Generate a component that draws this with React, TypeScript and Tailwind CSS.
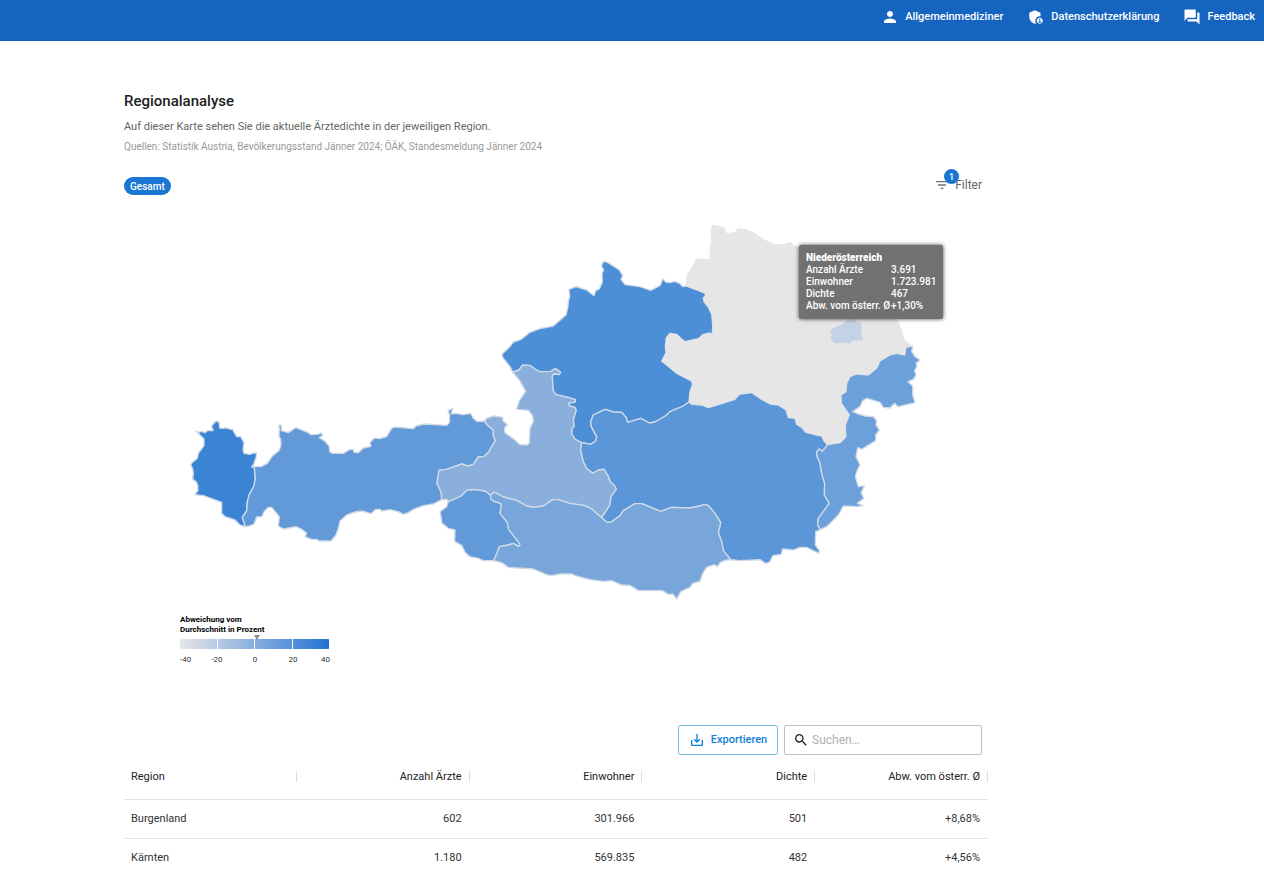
import { useState } from 'react';
import {
  MdAdminPanelSettings,
  MdFilterList,
  MdPerson,
  MdQuestionAnswer,
  MdSaveAlt,
  MdSearch,
} from 'react-icons/md';

interface RegionRow {
  region: string;
  doctors: string;
  inhabitants: string;
  density: string;
  deviation: string;
}

interface RegionShape {
  name: string;
  fill: string;
  points: string;
}

const rows: RegionRow[] = [
  { region: 'Burgenland', doctors: '602', inhabitants: '301.966', density: '501', deviation: '+8,68%' },
  { region: 'Kärnten', doctors: '1.180', inhabitants: '569.835', density: '482', deviation: '+4,56%' },
];

const columns = ['Region', 'Anzahl Ärzte', 'Einwohner', 'Dichte', 'Abw. vom österr. Ø'];

const tooltipRows = [
  ['Anzahl Ärzte', '3.691'],
  ['Einwohner', '1.723.981'],
  ['Dichte', '467'],
  ['Abw. vom österr. Ø', '+1,30%'],
];

const reverse = (points: string) => points.split(' ').reverse().join(' ');
const join = (...parts: string[]) => parts.join(' ');

// Borders that two regions share
const vbgTirol = '755,1400 763,1403 766,1435 762,1458 748,1483 742,1505 740,1533 727,1552 736,1580';
const tirolSbg =
  '1453,1263 1465,1278 1480,1290 1480,1308 1486,1322 1472,1345 1467,1355 1453,1369 1435,1371 1420,1393 1402,1398 1385,1392 1340,1408 1317,1411 1311,1450 1324,1478 1325,1499';
const sbgOsttirol = '1345,1505 1383,1488 1400,1471 1425,1468 1455,1473 1472,1486';
const osttirolKtn =
  '1472,1486 1472,1496 1482,1504 1502,1510 1504,1518 1500,1540 1522,1568 1526,1588 1552,1622 1560,1633 1556,1639 1540,1630 1525,1635 1498,1640 1490,1662 1481,1682';
const sbgKtn =
  '1472,1486 1480,1477 1486,1478 1510,1491 1552,1502 1580,1518 1600,1522 1630,1518 1658,1499 1673,1499 1710,1510 1755,1517 1775,1527 1805,1553';
const sbgStmk =
  '1805,1553 1830,1515 1833,1490 1849,1468 1846,1460 1830,1443 1825,1428 1812,1407 1795,1410 1778,1419 1760,1405 1750,1385 1742,1350 1745,1328';
const sbgOoe =
  '1745,1328 1725,1317 1715,1300 1717,1285 1723,1278 1720,1260 1729,1230 1725,1222 1708,1217 1707,1209 1725,1207 1727,1199 1705,1192 1668,1183 1660,1172 1657,1130 1661,1122 1678,1124 1682,1116 1666,1105 1652,1114 1620,1115 1605,1107 1590,1096 1568,1095 1556,1110 1538,1116';
const ooeNoe =
  '2058,858 2090,870 2116,880 2116,888 2110,893 2112,905 2125,922 2135,943 2138,975 2137,1003 2130,999 2110,1003 2095,1016 2055,1025 2045,1018 2030,1003 2010,1000 1999,1013 1996,1040 1998,1058 1985,1083 2030,1120 2073,1142 2078,1152 2070,1175 2067,1206';
const ooeStmk =
  '2067,1206 2050,1218 2010,1235 1996,1248 1965,1266 1948,1269 1922,1255 1883,1267 1878,1252 1865,1237 1840,1236 1815,1228 1780,1245 1772,1265 1774,1280 1790,1310 1787,1323 1773,1333 1745,1328';
const noeStmk =
  '2067,1206 2075,1213 2105,1215 2125,1223 2165,1211 2205,1198 2218,1183 2255,1178 2285,1198 2310,1212 2335,1215 2358,1230 2365,1253 2385,1255 2390,1273 2405,1282 2417,1297 2450,1305 2465,1308 2472,1323 2483,1334';
const noeBgld =
  '2738,1038 2718,1042 2714,1065 2690,1060 2670,1065 2640,1083 2630,1105 2605,1125 2570,1122 2550,1130 2540,1150 2538,1175 2523,1185 2524,1210 2548,1245 2536,1275 2538,1310 2520,1328 2483,1334';
const bgldStmk =
  '2461,1589 2453,1575 2455,1555 2488,1510 2473,1485 2474,1450 2465,1420 2460,1390 2450,1365 2450,1355 2458,1347 2467,1354 2483,1334';
const stmkKtn =
  '2192,1679 2170,1652 2165,1625 2155,1598 2162,1568 2145,1540 2125,1517 2113,1513 2100,1518 2070,1524 2015,1522 1982,1534 1925,1511 1905,1511 1870,1532 1860,1547 1835,1565 1823,1568 1805,1553';

const shapes: RegionShape[] = [
  {
    name: 'Vorarlberg',
    fill: '#3b84d3',
    points: join(
      '587,1293 595,1298 603,1294 615,1298 622,1292 640,1292 635,1280 637,1275 648,1263 657,1266 659,1284 672,1285 675,1283 693,1288 697,1286 703,1298 710,1310 722,1310 732,1328 729,1350 732,1360 748,1363 770,1357 768,1375 763,1385 762,1393',
      vbgTirol,
      '720,1575 705,1560 675,1550 665,1540 665,1507 610,1487 585,1484 594,1472 593,1455 588,1445 578,1438 580,1420 578,1405 572,1397 576,1388 592,1375 595,1360 612,1337 612,1317 600,1305'
    ),
  },
  {
    name: 'Tirol',
    fill: '#6299d8',
    points: join(
      reverse(vbgTirol),
      '783,1400 802,1390 817,1368 837,1352 843,1335 842,1318 837,1308 838,1285 836,1276 844,1275 844,1292 865,1298 887,1283 925,1298 932,1304 952,1303 964,1299 968,1306 958,1313 975,1324 988,1340 989,1355 997,1360 1030,1360 1050,1348 1060,1349 1062,1357 1075,1358 1090,1344 1110,1340 1113,1337 1109,1328 1123,1314 1140,1316 1160,1310 1175,1285 1183,1281 1220,1284 1240,1286 1248,1278 1273,1272 1340,1276 1348,1268 1349,1245 1344,1232 1358,1225 1354,1242 1365,1240 1390,1244 1412,1240 1420,1255 1432,1265',
      tirolSbg,
      '1300,1512 1270,1517 1240,1528 1225,1538 1210,1543 1195,1535 1170,1529 1145,1533 1140,1528 1127,1528 1113,1541 1085,1533 1065,1536 1040,1545 1020,1563 1015,1585 1008,1605 993,1623 958,1623 950,1618 935,1618 915,1610 920,1600 905,1588 888,1580 850,1587 835,1578 838,1550 815,1522 805,1522 792,1535 786,1550 770,1551 762,1572 748,1578'
    ),
  },
  {
    name: 'Osttirol',
    fill: '#6299d8',
    points: join(
      sbgOsttirol,
      osttirolKtn,
      '1450,1682 1435,1675 1410,1670 1395,1657 1386,1637 1364,1624 1365,1590 1345,1585 1326,1570 1324,1555 1320,1535 1340,1520'
    ),
  },
  {
    name: 'Salzburg',
    fill: '#8bafdc',
    points: join(
      tirolSbg,
      '1342,1498',
      sbgOsttirol,
      sbgKtn,
      sbgStmk,
      sbgOoe,
      '1560,1143 1577,1174 1558,1202 1550,1228 1585,1231 1598,1247 1600,1265 1590,1285 1588,1328 1582,1335 1560,1334 1545,1320 1515,1298 1513,1285 1522,1273 1508,1262 1509,1252 1480,1248 1460,1255'
    ),
  },
  {
    name: 'Oberösterreich',
    fill: '#4c8fd7',
    points: join(
      sbgOoe,
      '1530,1100 1508,1072 1506,1062 1528,1042 1540,1026 1562,1019 1590,997 1620,986 1660,978 1698,945 1704,920 1705,905 1709,890 1707,868 1728,860 1760,870 1782,887 1787,872 1798,867 1807,847 1806,820 1811,810 1804,797 1811,784 1823,787 1858,810 1868,827 1863,838 1875,854 1920,860 1952,871 1980,857 1989,836 1997,846 2010,848 2025,844 2040,851 2048,860',
      ooeNoe,
      ooeStmk
    ),
  },
  {
    name: 'Steiermark',
    fill: '#5b96d8',
    points: join(
      sbgStmk,
      reverse(ooeStmk),
      noeStmk,
      reverse(bgldStmk),
      '2447,1595 2446,1635 2458,1652 2457,1660 2440,1652 2420,1642 2400,1642 2380,1650 2347,1647 2344,1663 2318,1667 2310,1685 2298,1691 2280,1679 2220,1682',
      stmkKtn
    ),
  },
  {
    name: 'Kärnten',
    fill: '#78a6da',
    points: join(
      sbgKtn,
      reverse(stmkKtn),
      '2175,1681 2160,1688 2153,1700 2143,1694 2120,1702 2108,1720 2100,1744 2078,1750 2070,1762 2042,1775 2031,1797 2018,1782 2005,1783 1988,1772 1915,1772 1890,1756 1865,1755 1835,1742 1810,1744 1770,1739 1725,1727 1717,1722 1680,1722 1655,1727 1640,1724 1600,1707 1525,1702 1505,1688',
      reverse(osttirolKtn)
    ),
  },
  {
    name: 'Burgenland',
    fill: '#6ca0da',
    points: join(
      reverse(noeBgld),
      '2735,1055 2745,1070 2760,1080 2748,1090 2751,1098 2744,1112 2748,1125 2740,1138 2724,1145 2738,1158 2738,1185 2745,1208 2695,1220 2683,1210 2670,1224 2650,1222 2640,1207 2600,1195 2588,1202 2580,1220 2558,1235 2575,1242 2595,1248 2620,1250 2630,1263 2628,1275 2638,1290 2627,1305 2627,1322 2585,1348 2573,1343 2568,1370 2580,1395 2570,1415 2566,1430 2575,1460 2593,1457 2583,1478 2592,1495 2572,1510 2588,1516 2575,1520 2530,1518 2515,1545 2495,1565 2480,1580',
      bgldStmk
    ),
  },
];

const activeShapes: RegionShape[] = [
  {
    name: 'Niederösterreich',
    fill: '#e6e6e6',
    points: join(
      reverse(ooeNoe),
      '2058,850 2060,825 2080,795 2088,775 2110,776 2125,778 2130,765 2128,750 2133,725 2132,685 2137,675 2150,675 2175,683 2180,700 2205,695 2215,685 2240,688 2270,702 2290,717 2325,733 2350,733 2370,725 2380,735 2395,742 2450,755 2600,770 2670,885 2695,965 2705,990 2712,1017 2734,1036',
      noeBgld,
      reverse(noeStmk)
    ),
  },
  {
    name: 'Wien',
    fill: '#c3d2e4',
    points:
      '2490,993 2510,978 2525,975 2547,957 2562,957 2570,967 2583,967 2586,985 2583,1005 2591,1021 2560,1021 2547,1031 2530,1028 2505,1030 2492,1020 2496,1003',
  },
];

function TopBar() {
  return (
    <header className="flex h-[41px] items-start justify-end gap-6 bg-[#1565c0] pt-2 pr-[9px] text-[11px] leading-[18px] font-medium text-white">
      <a href="#profil" className="flex items-center gap-[6px]">
        <MdPerson className="h-[18px] w-[18px]" />
        Allgemeinmediziner
      </a>
      <a href="#datenschutz" className="flex items-center gap-[6px]">
        <MdAdminPanelSettings className="h-[18px] w-[18px]" />
        Datenschutzerklärung
      </a>
      <a href="#feedback" className="flex items-center gap-[6px]">
        <MdQuestionAnswer className="h-[18px] w-[18px]" />
        Feedback
      </a>
    </header>
  );
}

function MapTooltip() {
  return (
    <div className="absolute top-[25px] left-[675px] w-[144px] rounded-xs bg-[#717171] px-[7px] py-[7px] text-[10px] leading-3 font-medium whitespace-nowrap text-white shadow-[0_0_4px_rgba(0,0,0,0.7)]">
      <p className="font-black">Niederösterreich</p>
      {tooltipRows.map(([label, value]) => (
        <div key={label} className="flex">
          <span className="w-[85px] shrink-0">{label}</span>
          <span>{value}</span>
        </div>
      ))}
    </div>
  );
}

function RegionMap() {
  return (
    <div className="relative mt-[25px]">
      <svg viewBox="372 660 2574 1152" className="block w-full" role="img" aria-label="Ärztedichte nach Region">
        {shapes.map((shape) => (
          <polygon key={shape.name} points={shape.points} fill={shape.fill} stroke="#d0dae6" strokeWidth="4" strokeLinejoin="round" />
        ))}
        {activeShapes.map((shape) => (
          <polygon key={shape.name} points={shape.points} fill={shape.fill} />
        ))}
      </svg>
      <MapTooltip />
    </div>
  );
}

function Legend() {
  return (
    <div className="mt-[11px] ml-[56px] w-[150px] text-black">
      <p className="text-[8px] leading-[10px] font-bold">
        Abweichung vom
        <br />
        Durchschnitt in Prozent
      </p>
      <div className="relative mt-1 grid h-[10px] grid-cols-4 divide-x divide-white rounded-xs bg-linear-to-r from-[#e6e6e6] to-[#1a72d2]">
        <span />
        <span />
        <span />
        <span />
        <svg viewBox="0 0 6 5" className="absolute -top-[4px] left-[74px] h-[5px] w-[6px]">
          <path d="M0 0h6L3 5z" fill="#8f8f8f" />
        </svg>
      </div>
      <div className="mt-[6px] grid grid-cols-[18px_38px_38px_38px_18px] text-center text-[8px] leading-[10px] text-[#333]">
        <span className="text-left">-40</span>
        <span>-20</span>
        <span>0</span>
        <span>20</span>
        <span className="text-right">40</span>
      </div>
    </div>
  );
}

function RegionTable({ data }: { data: RegionRow[] }) {
  return (
    <table className="w-full table-fixed border-collapse text-[11px] leading-4 text-[#333]">
      <thead>
        <tr className="h-[44px] border-b border-[#e0e0e0]">
          {columns.map((column, index) => (
            <th key={column} className="p-0 font-normal text-[#222]">
              <div className={index === 0 ? 'flex items-center justify-between pl-[7px]' : 'flex items-center justify-end gap-[7px]'}>
                {column}
                <span className="h-[11px] w-px bg-[#dcdcdc]" />
              </div>
            </th>
          ))}
        </tr>
      </thead>
      <tbody>
        {data.map((row) => (
          <tr key={row.region} className="h-[39px] border-b border-[#e0e0e0] text-right">
            <td className="px-[7px] py-0 text-left">{row.region}</td>
            <td className="px-2 py-0">{row.doctors}</td>
            <td className="px-2 py-0">{row.inhabitants}</td>
            <td className="px-2 py-0">{row.density}</td>
            <td className="px-2 py-0">{row.deviation}</td>
          </tr>
        ))}
      </tbody>
    </table>
  );
}

export default function App() {
  const [search, setSearch] = useState('');
  const visibleRows = rows.filter((row) => row.region.toLowerCase().includes(search.toLowerCase()));

  return (
    <div className="min-h-screen bg-white font-[Roboto,sans-serif]">
      <TopBar />
      <main className="max-w-[988px] pt-[50px] pl-[124px]">
        <div className="pr-[6px]">
          <h1 className="text-[15px] leading-5 font-medium text-[#212121]">Regionalanalyse</h1>
          <p className="mt-2 text-[11px] leading-4 text-[#666]">
            Auf dieser Karte sehen Sie die aktuelle Ärztedichte in der jeweiligen Region.
          </p>
          <p className="mt-1 text-[10px] leading-4 text-[#999]">
            Quellen: Statistik Austria, Bevölkerungsstand Jänner 2024; ÖÄK, Standesmeldung Jänner 2024
          </p>

          <div className="mt-[22px] flex h-[18px] items-start justify-between">
            <span className="flex h-[18px] items-center rounded-full bg-[#1976d2] px-[6px] text-[10px] font-medium text-white">
              Gesamt
            </span>
            <button type="button" className="flex items-center gap-[5px] text-[12px] leading-4 text-[#666]">
              <span className="relative">
                <MdFilterList className="h-4 w-4 text-[#757575]" />
                <span className="absolute -top-[8px] left-[10px] flex h-[15px] w-[15px] items-center justify-center rounded-full bg-[#1976d2] text-[9px] font-medium text-white">
                  1
                </span>
              </span>
              Filter
            </button>
          </div>

          <RegionMap />
          <Legend />

          <div className="mt-[60px] flex justify-end gap-[6px]">
            <button
              type="button"
              className="flex h-[30px] w-[100px] items-center justify-center gap-[6px] rounded-xs border border-[#74bfe8] text-[11px] font-medium text-[#0f80d7]"
            >
              <MdSaveAlt className="h-4 w-4" />
              Exportieren
            </button>
            <label className="flex h-[30px] w-[198px] items-center gap-[3px] rounded-xs border border-[#c0c0c0] pl-2">
              <MdSearch className="h-4 w-4 shrink-0 text-[#222]" />
              <input
                type="search"
                aria-label="Suchen"
                placeholder="Suchen…"
                value={search}
                onChange={(e) => setSearch(e.target.value)}
                className="w-full min-w-0 bg-transparent text-[12px] leading-4 outline-none placeholder:text-[#b0b0b0]"
              />
            </label>
          </div>
        </div>

        <RegionTable data={visibleRows} />
      </main>
    </div>
  );
}
